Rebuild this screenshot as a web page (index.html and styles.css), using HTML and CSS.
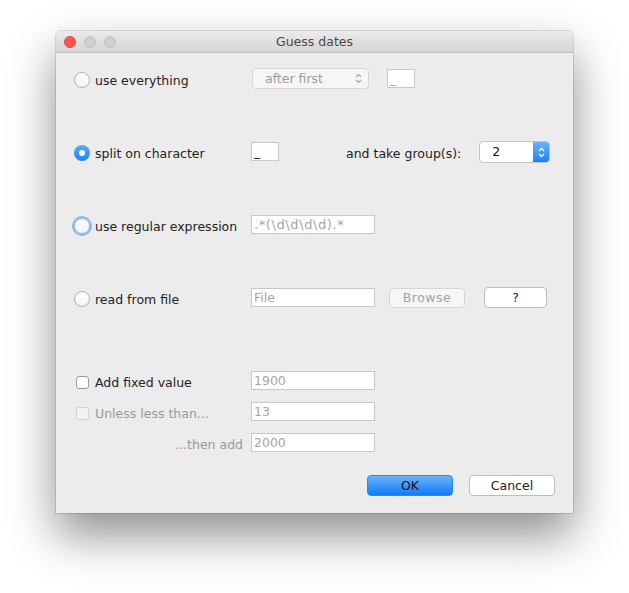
FILE: index.html
```html
<!DOCTYPE html>
<html>
<head>
<meta charset="utf-8">
<link rel="stylesheet" href="styles.css">
</head>
<body>
<div class="window">
  <div class="titlebar">
    <div class="lights">
      <span class="light red"></span>
      <span class="light gray"></span>
      <span class="light gray"></span>
    </div>
    <div class="title">Guess dates</div>
  </div>
  <div class="content">
    <div class="row">
      <div class="lead"><span class="radio"></span><span class="label">use everything</span></div>
      <div class="popup disabled"><span>after first</span><span class="chev"><svg width="7" height="11" viewBox="0 0 7 11"><path d="M1 4 L3.5 1.5 L6 4 M1 7 L3.5 9.5 L6 7" fill="none" stroke="#a5a5a5" stroke-width="1.1"/></svg></span></div>
      <div class="field small ml18">_</div>
    </div>
    <div class="row gap-big">
      <div class="lead"><span class="radio on"></span><span class="label">split on character</span></div>
      <div class="field small dark">_</div>
      <span class="label ml67">and take group(s):</span>
      <div class="combo"><span class="val">2</span><span class="step"><svg width="7" height="11" viewBox="0 0 7 11"><path d="M1 4 L3.5 1.5 L6 4 M1 7 L3.5 9.5 L6 7" fill="none" stroke="#fff" stroke-width="1.3"/></svg></span></div>
    </div>
    <div class="row gap-big">
      <div class="lead"><span class="radio focus"></span><span class="label">use regular expression</span></div>
      <div class="field wide regex">.*(\d\d\d\d).*</div>
    </div>
    <div class="row gap-big">
      <div class="lead"><span class="radio"></span><span class="label">read from file</span></div>
      <div class="field wide">File</div>
      <div class="btn browse">Browse</div>
      <div class="btn help">?</div>
    </div>
    <div class="row gap-mid">
      <div class="lead"><span class="check"></span><span class="label">Add fixed value</span></div>
      <div class="field wide">1900</div>
    </div>
    <div class="row gap-small">
      <div class="lead"><span class="check dis"></span><span class="label grey">Unless less than...</span></div>
      <div class="field wide">13</div>
    </div>
    <div class="row gap-small">
      <div class="lead right"><span class="label grey">...then add</span></div>
      <div class="field wide">2000</div>
    </div>
    <div class="row buttons">
      <div class="btn ok">OK</div>
      <div class="btn cancel">Cancel</div>
    </div>
  </div>
</div>
</body>
</html>
```
FILE: styles.css
```css
html, body {
  margin: 0;
  padding: 0;
  background: #ffffff;
}
body {
  padding: 31px 0 0 56px;
  height: 593px;
  box-sizing: border-box;
  font-family: "DejaVu Sans", "Liberation Sans", sans-serif;
  font-size: 12.5px;
  color: #222;
}
.window {
  width: 517px;
  height: 482px;
  border-radius: 5px 5px 0 0;
  background: #ececec;
  box-shadow: 0 22px 48px rgba(0,0,0,0.45), 0 0 0 1px rgba(0,0,0,0.12);
  display: flex;
  flex-direction: column;
}
.titlebar {
  height: 22px;
  box-sizing: border-box;
  border-radius: 5px 5px 0 0;
  background: linear-gradient(#ebebeb, #d5d5d5);
  border-bottom: 1px solid #bdbdbd;
  display: flex;
  align-items: center;
  position: relative;
}
.lights {
  display: flex;
  gap: 8px;
  padding-left: 8px;
}
.light {
  width: 12px;
  height: 12px;
  border-radius: 50%;
  box-sizing: border-box;
}
.light.red { background: #fc5753; border: 1px solid #df4744; }
.light.gray { background: #d0d0d0; border: 1px solid #bfbfbf; }
.title {
  position: absolute;
  left: 0;
  right: 0;
  text-align: center;
  font-size: 12.5px;
  color: #4a4a4a;
}
.content {
  flex: 1;
  padding: 15px 0 0 18px;
  display: flex;
  flex-direction: column;
}
.row {
  display: flex;
  align-items: center;
  height: 24px;
}
.gap-big { margin-top: 49px; }
.gap-mid { margin-top: 59px; }
.gap-small { margin-top: 7px; }
.lead {
  width: 177px;
  display: flex;
  align-items: center;
  gap: 5px;
  flex: none;
}
.lead.right { justify-content: flex-end; padding-right: 8px; box-sizing: border-box; }
.label { white-space: nowrap; color: #222; }
.label.grey { color: #9a9a9a; }
.radio {
  width: 16px;
  height: 16px;
  border-radius: 50%;
  box-sizing: border-box;
  border: 1px solid #b2b2b2;
  background: linear-gradient(#ffffff, #f4f4f4);
  flex: none;
  position: relative;
}
.radio.on {
  border: none;
  background: linear-gradient(#5aabfc, #1d84f9);
}
.radio.on::after {
  content: "";
  position: absolute;
  left: 5px;
  top: 5px;
  width: 6px;
  height: 6px;
  border-radius: 50%;
  background: #fff;
}
.radio.focus {
  box-shadow: 0 0 0 2px rgba(110,165,235,0.75);
  border-color: #8db6e8;
}
.check {
  width: 13px;
  height: 13px;
  box-sizing: border-box;
  border: 1px solid #9c9c9c;
  border-radius: 3px;
  background: #fff;
  flex: none;
  margin-left: 2px;
  margin-right: 1px;
}
.check.dis { border-color: #cfcfcf; background: #f3f3f3; }
.field {
  height: 19px;
  box-sizing: border-box;
  border: 1px solid #c8c8c8;
  background: #fff;
  font-size: 12.5px;
  color: #a5a5a5;
  padding: 0 2px;
  line-height: 17px;
  flex: none;
  white-space: nowrap;
  margin-bottom: 3px;
  overflow: hidden;
}
.field.regex { font-size: 13px; letter-spacing: 0.6px; }
.field.small { width: 28px; }
.field.dark { color: #222; }
.field.wide { width: 124px; }
.ml18 { margin-left: 18px; }
.ml67 { margin-left: 67px; }
.popup {
  width: 117px;
  height: 21px;
  box-sizing: border-box;
  margin-left: 1px;
  margin-bottom: 4px;
  border: 1px solid #d6d6d6;
  border-radius: 4px;
  background: #f6f6f6;
  color: #9c9c9c;
  display: flex;
  align-items: center;
  justify-content: space-between;
  padding: 0 6px 0 12px;
  font-size: 12.5px;
}
.chev { display: flex; }
.combo {
  margin-left: 18px;
  margin-bottom: 2px;
  width: 71px;
  height: 22px;
  box-sizing: border-box;
  border: 1px solid #c3c3c3;
  border-radius: 4px;
  background: #fff;
  display: flex;
  overflow: hidden;
}
.combo .val {
  flex: 1;
  padding-left: 12px;
  line-height: 20px;
  font-size: 12.5px;
  color: #111;
}
.combo .step {
  width: 16px;
  background: linear-gradient(#6cb3fb, #1a81f8);
  display: flex;
  align-items: center;
  justify-content: center;
}
.btn {
  height: 20px;
  box-sizing: border-box;
  border-radius: 4px;
  display: flex;
  align-items: center;
  justify-content: center;
  flex: none;
  font-size: 12.5px;
}
.browse {
  width: 76px;
  margin-left: 14px;
  margin-bottom: 3px;
  border: 1px solid #d6d6d6;
  background: #f6f6f6;
  color: #a3a3a3;
  letter-spacing: 0.5px;
}
.help {
  width: 63px;
  margin-left: 19px;
  margin-bottom: 3px;
  border: 1px solid #bcbcbc;
  background: #fff;
  color: #222;
  height: 21px;
}
.buttons {
  margin-top: 17px;
  justify-content: flex-end;
  padding-right: 18px;
  gap: 16px;
}
.ok {
  width: 86px;
  height: 21px;
  background: linear-gradient(#6cb2fc, #0f7cf8);
  border: 1px solid #2a86f0;
  color: #111;
}
.cancel {
  width: 86px;
  height: 21px;
  background: #fff;
  border: 1px solid #bcbcbc;
  color: #222;
}
```
